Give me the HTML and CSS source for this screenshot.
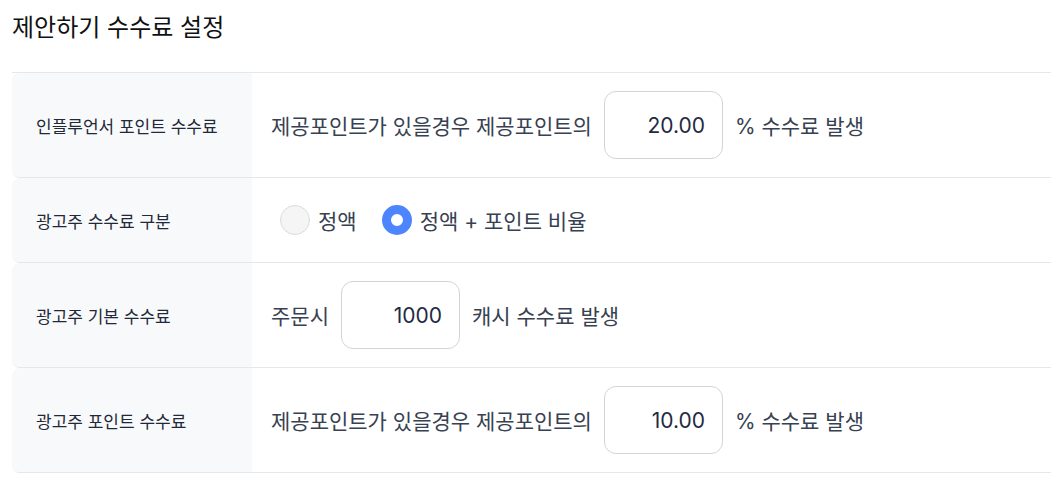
FILE: index.html
```html
<!DOCTYPE html>
<html lang="ko">
<head>
    <meta charset="UTF-8">
    <meta name="viewport" content="width=device-width, initial-scale=1.0">
    <title>제안하기 수수료 설정</title>
    <link rel="stylesheet" href="styles.css">
</head>
<body>
    <div class="container">
        <h1>제안하기 수수료 설정</h1>

        <div class="fee-table">
            <div class="fee-row">
                <div class="fee-label">인플루언서 포인트 수수료</div>
                <div class="fee-value">
                    <span>제공포인트가 있을경우 제공포인트의</span>
                    <input type="text" class="num-input" value="20.00">
                    <span>% 수수료 발생</span>
                </div>
            </div>
            <div class="fee-row">
                <div class="fee-label">광고주 수수료 구분</div>
                <div class="fee-value radio-group">
                    <label class="radio-option">
                        <input type="radio" name="feeType" value="fixed">
                        <span>정액</span>
                    </label>
                    <label class="radio-option">
                        <input type="radio" name="feeType" value="mixed" checked>
                        <span>정액 + 포인트 비율</span>
                    </label>
                </div>
            </div>
            <div class="fee-row">
                <div class="fee-label">광고주 기본 수수료</div>
                <div class="fee-value">
                    <span>주문시</span>
                    <input type="text" class="num-input" value="1000">
                    <span>캐시 수수료 발생</span>
                </div>
            </div>
            <div class="fee-row">
                <div class="fee-label">광고주 포인트 수수료</div>
                <div class="fee-value">
                    <span>제공포인트가 있을경우 제공포인트의</span>
                    <input type="text" class="num-input" value="10.00">
                    <span>% 수수료 발생</span>
                </div>
            </div>
        </div>
    </div>
</body>
</html>
```

FILE: styles.css
```css
body {
    margin: 0;
    font-family: Inter, "Noto Sans CJK KR", sans-serif;
    background-color: #fff;
    color: #374151;
}
.container {
    padding-left: 12px;
}
h1 {
    margin: 0 0 28px 0;
    padding-top: 12px;
    font-size: 24px;
    line-height: 32px;
    font-weight: 400;
    color: #111;
}
.fee-table {
    border-top: 1px solid #e5e7eb;
}
.fee-row {
    display: flex;
    border-bottom: 1px solid #e5e7eb;
    border-radius: 8px 0 0 8px;
    overflow: hidden;
}
.fee-label {
    width: 216px;
    flex-shrink: 0;
    display: flex;
    align-items: center;
    padding-left: 24px;
    background-color: #f8f9fb;
    font-size: 17px;
    color: #1f2937;
}
.fee-value {
    flex: 1;
    display: flex;
    align-items: center;
    gap: 12px;
    padding: 18px 19px;
    font-size: 21px;
}
.num-input {
    width: 119px;
    height: 68px;
    box-sizing: border-box;
    padding: 0 17px;
    border: 1px solid #d1d5db;
    border-radius: 12px;
    text-align: right;
    font-family: Inter, sans-serif;
    font-size: 21px;
    color: #1f2a44;
}
.radio-group {
    min-height: 48px;
    padding-left: 28px;
    gap: 25px;
}
.radio-option {
    display: flex;
    align-items: center;
    gap: 8px;
    cursor: pointer;
}
.radio-option input {
    appearance: none;
    margin: 0;
    width: 30px;
    height: 30px;
    border-radius: 50%;
    border: 1px solid #dcdcdc;
    background-color: #f5f5f5;
}
.radio-option input:checked {
    border: 9px solid #4d85ff;
    background-color: #fff;
}
```
